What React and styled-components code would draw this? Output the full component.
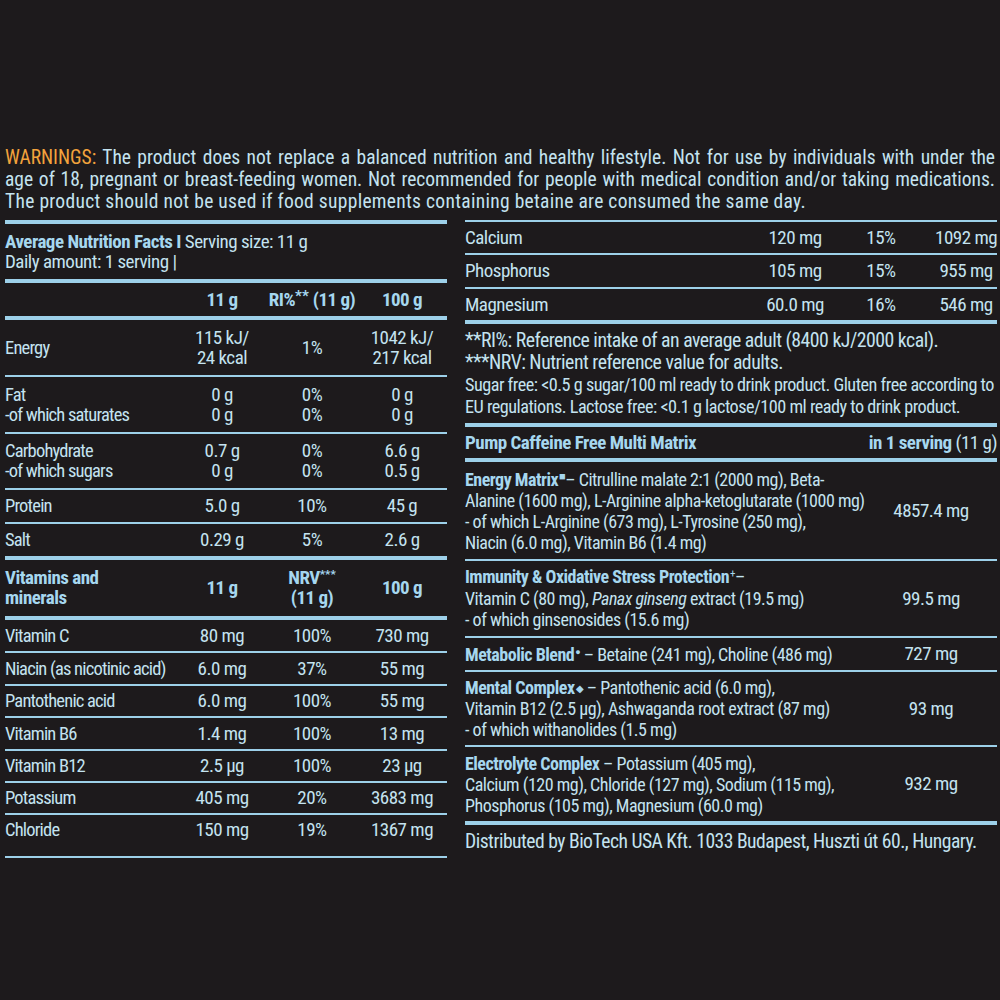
import React from "react";
import styled, { createGlobalStyle } from "styled-components";

const TEXT = "#c4e3f0";
const HEAD = "#a6d7ef";
const LINE = "#9dd0e9";
const BG = "#1d1a1c";

const GlobalStyle = createGlobalStyle`
  html, body { margin: 0; padding: 0; background: ${BG}; }
  * { box-sizing: border-box; }
`;

const Page = styled.div`
  width: 1000px;
  height: 1000px;
  padding-top: 147px;
  background: ${BG};
  color: ${TEXT};
  font-family: "Roboto Condensed", Roboto, "Liberation Sans", sans-serif;
  font-stretch: condensed;
  overflow: hidden;
`;

const Warnings = styled.div`
  padding: 0 5px;
  font-size: 19.5px;
  line-height: 22px;
`;

const WarnLine = styled.div`
  white-space: nowrap;
  letter-spacing: ${(p) => (p.$last ? "0.3px" : "0")};
  text-align: ${(p) => (p.$last ? "left" : "justify")};
  text-align-last: ${(p) => (p.$last ? "left" : "justify")};
`;

const Orange = styled.span`
  color: #f2a23c;
`;

const Columns = styled.div`
  display: grid;
  grid-template-columns: 442px 532px;
  column-gap: 18px;
  padding-left: 5px;
  margin-top: 7px;
  font-size: 19px;
  letter-spacing: -0.5px;
`;

const Table = styled.div`
  display: flex;
  flex-direction: column;
  border-bottom: ${(p) => p.$bottom || 0}px solid ${LINE};
`;

const Row = styled.div`
  display: grid;
  grid-template-columns: ${(p) => p.$cols};
  align-items: center;
  border-top: ${(p) => (p.$thick ? 4 : 2)}px solid ${LINE};
  height: ${(p) => p.$h}px;
  box-sizing: content-box;
  line-height: ${(p) => p.$lh || 20}px;
`;

const Cell = styled.div`
  text-align: ${(p) => p.$align || "center"};
  white-space: nowrap;
  font-size: ${(p) => (p.$size ? `${p.$size}px` : "inherit")};
  grid-column: ${(p) => (p.$span ? "1 / -1" : "auto")};
`;

const Label = styled.div`
  text-align: left;
  white-space: nowrap;
  font-size: 18.5px;
  letter-spacing: -0.8px;
`;

const Bold = styled.span`
  font-weight: 700;
  color: ${HEAD};
`;

const Sup = styled.span`
  font-size: ${(p) => p.$size || 0.62}em;
  vertical-align: ${(p) => p.$raise || 0.5}em;
  line-height: 0;
  letter-spacing: 0;
`;

const Italic = styled.i`
  font-style: italic;
`;

const Notes = styled.div`
  border-top: 4px solid ${LINE};
  padding: 6px 0 5px;
  line-height: 22px;
`;

const NoteLine = styled.div`
  white-space: nowrap;
  font-size: ${(p) => p.$size || 19.8}px;
`;

const IngText = styled.div`
  white-space: nowrap;
  font-size: 18px;
  line-height: ${(p) => p.$lh || 21}px;
`;

const Mark = styled.span`
  font-size: ${(p) => p.$size || 10}px;
  vertical-align: ${(p) => p.$raise || 6}px;
  line-height: 0;
  color: ${HEAD};
  margin-left: 1px;
`;

const LEFT_COLS = "172px 90px 90px 90px";
const MIN_COLS = "298px 64px 108px 62px";
const ING_COLS = "1fr 132px";

const Multi = ({ lines }) =>
  lines.map((l, i) => (
    <React.Fragment key={i}>
      {i > 0 && <br />}
      {l}
    </React.Fragment>
  ));

const nutrition = [
  { thick: true, h: 55, label: ["Energy"], a: ["115 kJ/", "24 kcal"], b: ["1%"], c: ["1042 kJ/", "217 kcal"] },
  { h: 55, label: ["Fat", "-of which saturates"], a: ["0 g", "0 g"], b: ["0%", "0%"], c: ["0 g", "0 g"] },
  { h: 54, label: ["Carbohydrate", "-of which sugars"], a: ["0.7 g", "0 g"], b: ["0%", "0%"], c: ["6.6 g", "0.5 g"] },
  { h: 32, label: ["Protein"], a: ["5.0 g"], b: ["10%"], c: ["45 g"] },
  { h: 32, label: ["Salt"], a: ["0.29 g"], b: ["5%"], c: ["2.6 g"] },
];

const vitamins = [
  { thick: true, h: 31, label: "Vitamin C", a: "80 mg", b: "100%", c: "730 mg" },
  { h: 31, label: "Niacin (as nicotinic acid)", a: "6.0 mg", b: "37%", c: "55 mg" },
  { h: 30, label: "Pantothenic acid", a: "6.0 mg", b: "100%", c: "55 mg" },
  { h: 31, label: "Vitamin B6", a: "1.4 mg", b: "100%", c: "13 mg" },
  { h: 30, label: "Vitamin B12", a: "2.5 µg", b: "100%", c: "23 µg" },
  { h: 30, label: "Potassium", a: "405 mg", b: "20%", c: "3683 mg" },
  { h: 30, label: "Chloride", a: "150 mg", b: "19%", c: "1367 mg" },
];

const minerals = [
  { h: 31, label: "Calcium", a: "120 mg", b: "15%", c: "1092 mg" },
  { h: 32, label: "Phosphorus", a: "105 mg", b: "15%", c: "955 mg" },
  { h: 31, label: "Magnesium", a: "60.0 mg", b: "16%", c: "546 mg" },
];

export default function App() {
  return (
    <Page>
      <GlobalStyle />
      <Warnings>
        <WarnLine>
          <Orange>WARNINGS:</Orange> The product does not replace a balanced nutrition and healthy lifestyle. Not for use by individuals with under the
        </WarnLine>
        <WarnLine>
          age of 18, pregnant or breast-feeding women. Not recommended for people with medical condition and/or taking medications.
        </WarnLine>
        <WarnLine $last>
          The product should not be used if food supplements containing betaine are consumed the same day.
        </WarnLine>
      </Warnings>

      <Columns>
        <Table $bottom={2}>
          <Row $cols={LEFT_COLS} $thick $h={55} $lh={19.5}>
            <Cell $align="left" $span>
              <Bold>Average Nutrition Facts I</Bold> Serving size: 11 g
              <br />
              Daily amount: 1 serving |
            </Cell>
          </Row>
          <Row $cols={LEFT_COLS} $thick $h={33}>
            <Cell />
            <Cell><Bold>11 g</Bold></Cell>
            <Cell><Bold>RI%<Sup $size={0.8} $raise={0.3}>**</Sup> (11 g)</Bold></Cell>
            <Cell><Bold>100 g</Bold></Cell>
          </Row>
          {nutrition.map((r) => (
            <Row key={r.label[0]} $cols={LEFT_COLS} $thick={r.thick} $h={r.h}>
              <Label><Multi lines={r.label} /></Label>
              <Cell><Multi lines={r.a} /></Cell>
              <Cell><Multi lines={r.b} /></Cell>
              <Cell><Multi lines={r.c} /></Cell>
            </Row>
          ))}
          <Row $cols={LEFT_COLS} $thick $h={56}>
            <Cell $align="left">
              <Bold>Vitamins and<br />minerals</Bold>
            </Cell>
            <Cell><Bold>11 g</Bold></Cell>
            <Cell><Bold>NRV<Sup>***</Sup><br />(11 g)</Bold></Cell>
            <Cell><Bold>100 g</Bold></Cell>
          </Row>
          {vitamins.map((r) => (
            <Row key={r.label} $cols={LEFT_COLS} $thick={r.thick} $h={r.h}>
              <Label>{r.label}</Label>
              <Cell>{r.a}</Cell>
              <Cell>{r.b}</Cell>
              <Cell>{r.c}</Cell>
            </Row>
          ))}
        </Table>

        <Table>
          {minerals.map((r) => (
            <Row key={r.label} $cols={MIN_COLS} $h={r.h}>
              <Cell $align="left">{r.label}</Cell>
              <Cell>{r.a}</Cell>
              <Cell>{r.b}</Cell>
              <Cell>{r.c}</Cell>
            </Row>
          ))}
          <Notes>
            <NoteLine>**RI%: Reference intake of an average adult (8400 kJ/2000 kcal).</NoteLine>
            <NoteLine>***NRV: Nutrient reference value for adults.</NoteLine>
            <NoteLine $size={18.2}>Sugar free: &lt;0.5 g sugar/100 ml ready to drink product. Gluten free according to</NoteLine>
            <NoteLine $size={18.2}>EU regulations. Lactose free: &lt;0.1 g lactose/100 ml ready to drink product.</NoteLine>
          </Notes>
          <Row $cols="1fr auto" $thick $h={31}>
            <Cell $align="left"><Bold>Pump Caffeine Free Multi Matrix</Bold></Cell>
            <Cell $align="right"><Bold>in 1 serving</Bold> (11 g)</Cell>
          </Row>
          <Row $cols={ING_COLS} $thick $h={97}>
            <IngText>
              <Bold>Energy Matrix</Bold><Mark $size={11} $raise={6}>■</Mark>– Citrulline malate 2:1 (2000 mg), Beta-
              <br />Alanine (1600 mg), L-Arginine alpha-ketoglutarate (1000 mg)
              <br />- of which L-Arginine (673 mg), L-Tyrosine (250 mg),
              <br />Niacin (6.0 mg), Vitamin B6 (1.4 mg)
            </IngText>
            <Cell>4857.4 mg</Cell>
          </Row>
          <Row $cols={ING_COLS} $h={75}>
            <IngText $lh={21.5}>
              <Bold>Immunity &amp; Oxidative Stress Protection</Bold><Mark $size={11} $raise={6}>+</Mark>–
              <br />Vitamin C (80 mg), <Italic>Panax ginseng</Italic> extract (19.5 mg)
              <br />- of which ginsenosides (15.6 mg)
            </IngText>
            <Cell>99.5 mg</Cell>
          </Row>
          <Row $cols={ING_COLS} $h={32}>
            <IngText>
              <Bold>Metabolic Blend</Bold><Mark $size={9} $raise={6}>●</Mark> – Betaine (241 mg), Choline (486 mg)
            </IngText>
            <Cell>727 mg</Cell>
          </Row>
          <Row $cols={ING_COLS} $h={73}>
            <IngText>
              <Bold>Mental Complex</Bold><Mark $size={10} $raise={2}>◆</Mark> – Pantothenic acid (6.0 mg),
              <br />Vitamin B12 (2.5 µg), Ashwaganda root extract (87 mg)
              <br />- of which withanolides (1.5 mg)
            </IngText>
            <Cell>93 mg</Cell>
          </Row>
          <Row $cols={ING_COLS} $h={74}>
            <IngText>
              <Bold>Electrolyte Complex</Bold> – Potassium (405 mg),
              <br />Calcium (120 mg), Chloride (127 mg), Sodium (115 mg),
              <br />Phosphorus (105 mg), Magnesium (60.0 mg)
            </IngText>
            <Cell>932 mg</Cell>
          </Row>
          <Row $cols="1fr" $thick $h={33}>
            <Cell $align="left" $size={19.6}>Distributed by BioTech USA Kft. 1033 Budapest, Huszti út 60., Hungary.</Cell>
          </Row>
        </Table>
      </Columns>
    </Page>
  );
}
